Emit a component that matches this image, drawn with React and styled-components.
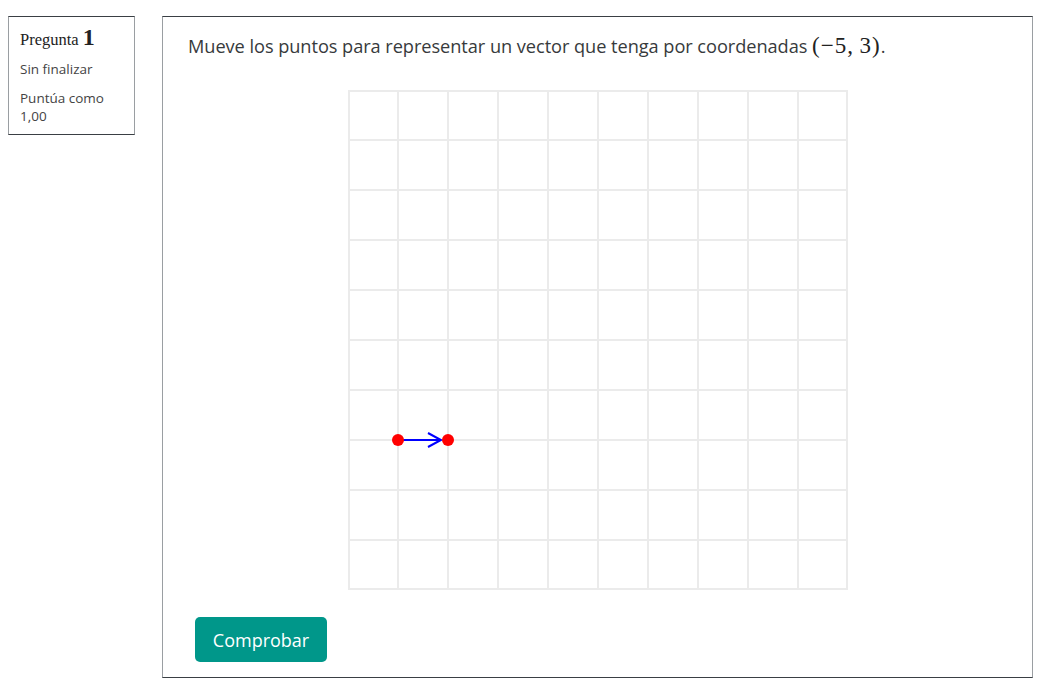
import React from "react";
import styled, { createGlobalStyle } from "styled-components";

const GlobalStyle = createGlobalStyle`
	html, body {
		margin: 0;
		padding: 0;
		background: #fff;
	}
	body {
		font-family: "Open Sans", "Liberation Sans", sans-serif;
		color: #373a3c;
	}
`;

const Page = styled.div`
	display: flex;
	align-items: flex-start;
	gap: 27px;
	padding: 16px 0 0 8px;
`;

const Info = styled.div`
	width: 127px;
	height: 119px;
	box-sizing: border-box;
	padding: 8px 11px 10px 11px;
	border-top: 1px solid #3a3f44;
	border-bottom: 1px solid #3a3f44;
	border-left: 1px solid #9a9ea2;
	border-right: 1px solid #9a9ea2;
	display: flex;
	flex-direction: column;
`;

const QNo = styled.h3`
	margin: 0 0 8px;
	font-family: "Liberation Serif", "DejaVu Serif", serif;
	font-weight: 400;
	font-size: 16.5px;
	line-height: 24px;
	color: #222;

	b {
		font-size: 24px;
		font-weight: 700;
	}
`;

const State = styled.div`
	margin-bottom: ${({ $gap }) => $gap || 0}px;
	font-size: 13.5px;
	line-height: 18px;
	color: #444;
`;

const Content = styled.div`
	width: 871px;
	height: 662px;
	box-sizing: border-box;
	padding: 15px 25px 15px 25px;
	border-top: 1px solid #3a3f44;
	border-bottom: 1px solid #3a3f44;
	border-left: 1px solid #9a9ea2;
	border-right: 1px solid #9a9ea2;
	display: flex;
	flex-direction: column;
`;

const QText = styled.p`
	margin: 0;
	font-size: 18.2px;
	line-height: 28px;
	letter-spacing: -0.05px;
	color: #373a3c;

	.math {
		font-family: "Liberation Serif", "DejaVu Serif", serif;
		font-size: 23px;
		color: #222;
		letter-spacing: 1px;
	}
`;

const Board = styled.div`
	align-self: center;
	margin-top: 30px;
	width: 500px;
	height: 500px;
`;

const Check = styled.button`
	align-self: flex-start;
	margin-top: 27px;
	margin-left: 7px;
	width: 132px;
	height: 45px;
	border: none;
	border-radius: 5px;
	background: #00978a;
	color: #fff;
	font-family: "Open Sans", "Liberation Sans", sans-serif;
	font-size: 18px;
	cursor: pointer;
`;

const Grid = () => {
	const lines = [];
	for (let i = 0; i <= 10; i++) {
		const p = i * 50 + (i === 10 ? -1 : i === 0 ? 1 : 0);
		lines.push(<line key={"v" + i} x1={p} y1={0} x2={p} y2={500} />);
		lines.push(<line key={"h" + i} x1={0} y1={p} x2={500} y2={p} />);
	}
	return (
		<svg width="500" height="500" viewBox="0 0 500 500">
			<g stroke="#ebebeb" strokeWidth="2">{lines}</g>
			<line x1="50" y1="350" x2="92" y2="350" stroke="#0000ff" strokeWidth="2" />
			<path d="M80 343 L93 350 L80 357" fill="none" stroke="#0000ff" strokeWidth="2" />
			<circle cx="50" cy="350" r="6" fill="#ff0000" />
			<circle cx="100" cy="350" r="6" fill="#ff0000" />
		</svg>
	);
};

const App = () => (
	<>
		<GlobalStyle />
		<Page>
			<Info>
				<QNo>Pregunta <b>1</b></QNo>
				<State $gap={11}>Sin finalizar</State>
				<State>Puntúa como 1,00</State>
			</Info>
			<Content>
				<QText>
					Mueve los puntos para representar un vector que tenga por coordenadas{" "}
					<span className="math">(−5,&thinsp;3)</span>.
				</QText>
				<Board>
					<Grid />
				</Board>
				<Check>Comprobar</Check>
			</Content>
		</Page>
	</>
);

export default App;
